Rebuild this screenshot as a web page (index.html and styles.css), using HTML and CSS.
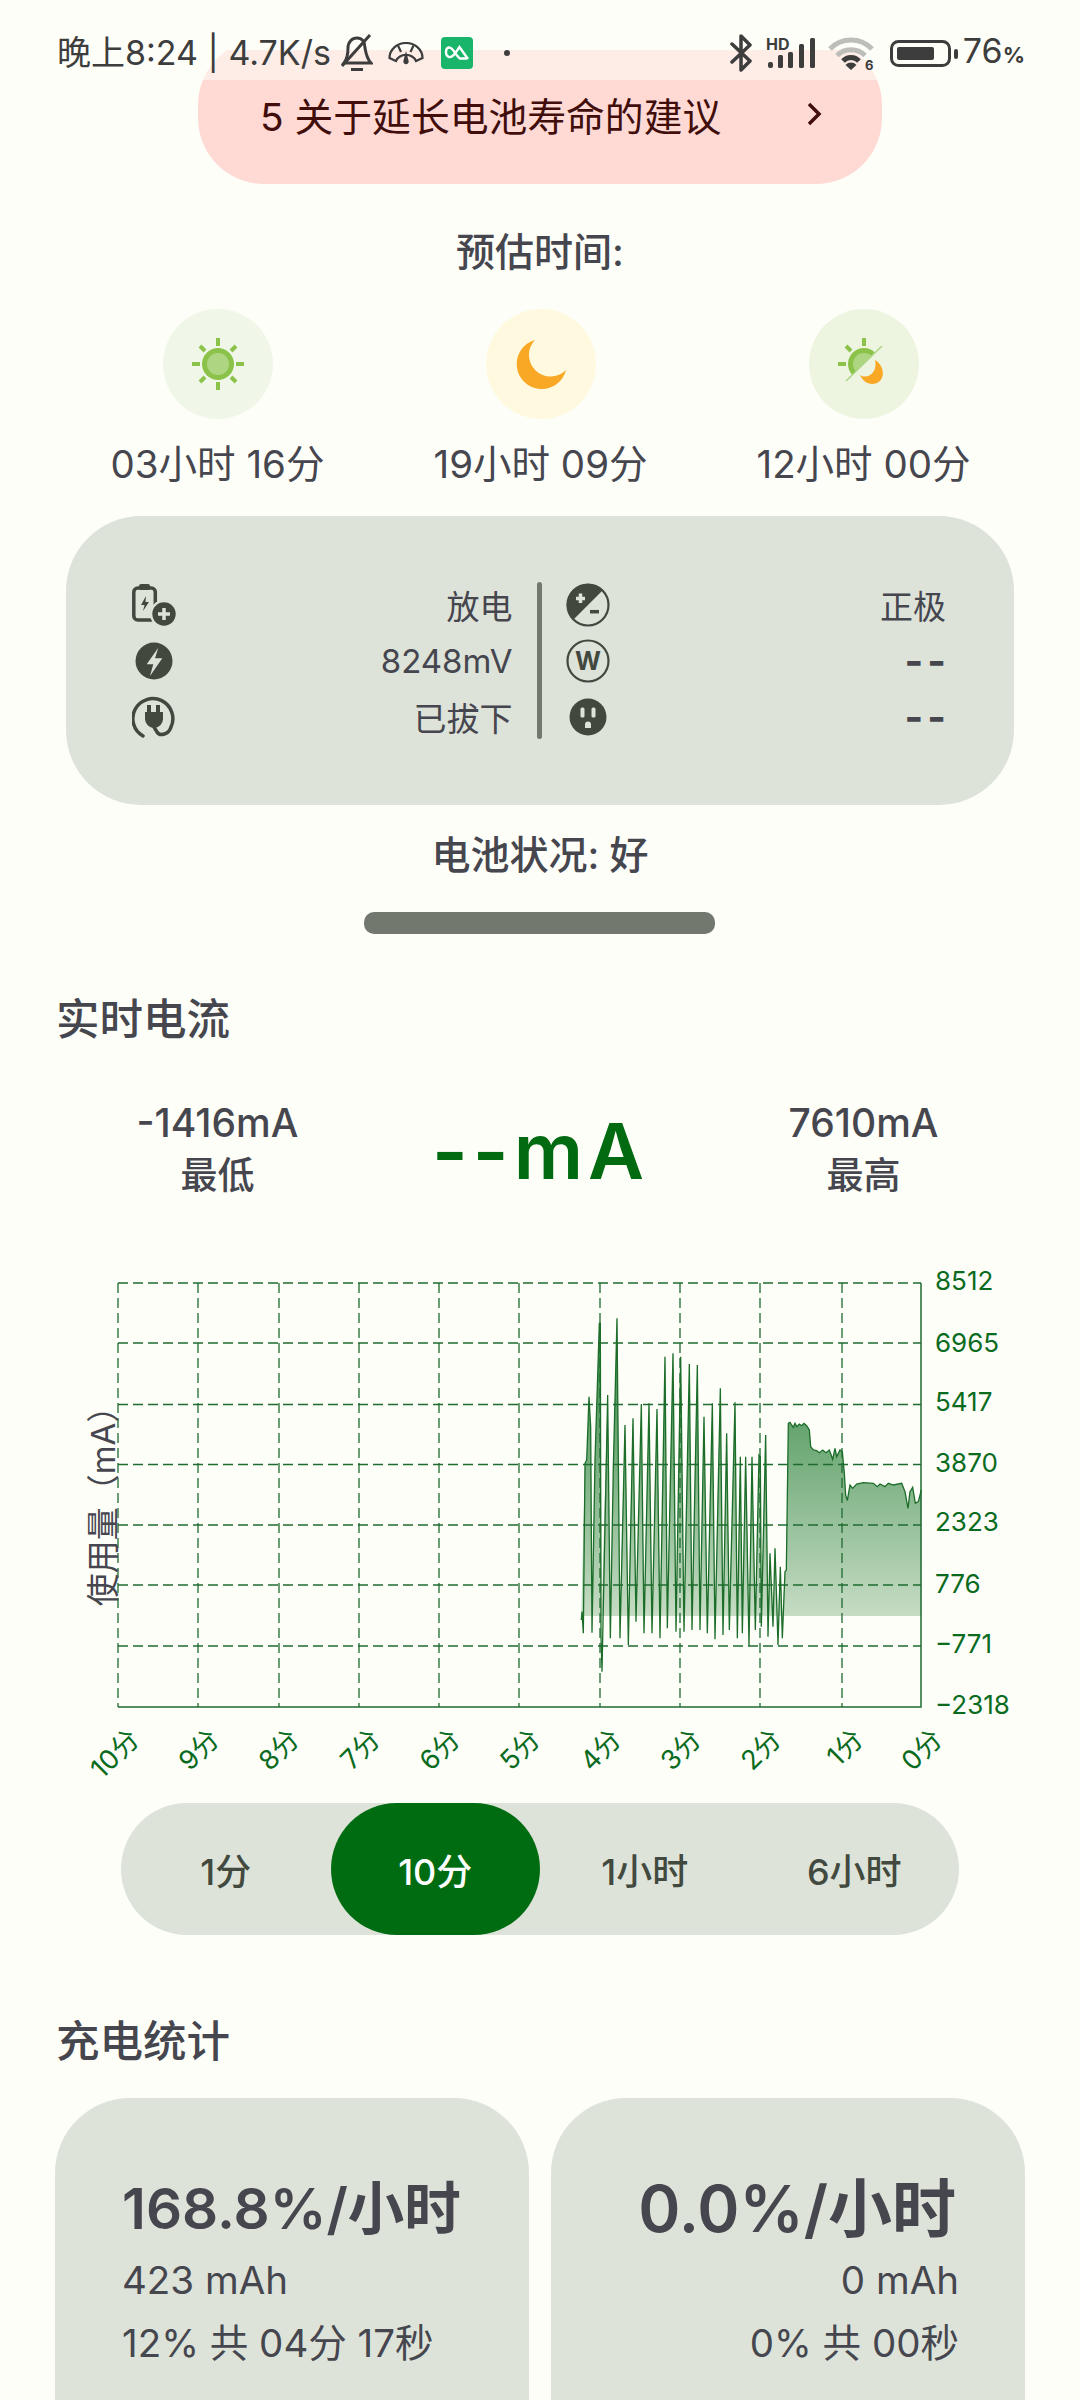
FILE: index.html
```html
<!DOCTYPE html>
<html lang="zh-CN">
<head>
    <meta charset="UTF-8">
    <meta name="viewport" content="width=device-width, initial-scale=1.0">
    <title>电池信息</title>
    <link rel="stylesheet" href="styles.css">
</head>
<body>
<div class="screen">
    <div class="status">
        <div class="status-left">
            <span class="status-text">晚上8:24 | 4.7K/s</span>
            <svg class="ic-bell" viewBox="0 0 33 38">
                <path class="st-line" d="M4 29C8 24 8 18 8 14C8 8 12 4 17 4C22 4 25 8 25 14C26 20 27 25 31 29Z"/>
                <path class="st-line" d="M30 1L2 32M11 35.500H23"/>
            </svg>
            <svg class="ic-gauge" viewBox="0 0 36 23">
                <path class="st-thin" d="M1.500 16A16.500 15 0 0 1 34.500 16L28 19A11 10.500 0 0 0 8 19Z"/>
                <path class="st-thin" d="M10 3.500L13 10M25.500 3.500L22.500 10"/>
                <path class="st-fill" d="M18 9L20.500 18.500A2.700 2.700 0 1 1 15.500 18.500Z"/>
            </svg>
            <svg class="ic-app" viewBox="0 0 32 32">
                <rect class="app-bg" width="32" height="32" rx="4"/>
                <path class="app-mark" d="M27 22L18.500 10C15 15 12 21 8 20C4 19 4 11 8 10.500C12 10 15 19 19 21.500H26"/>
            </svg>
            <span class="status-dot"></span>
        </div>
        <div class="status-right">
            <svg class="ic-bt" viewBox="0 0 24 38">
                <path class="st-bold" d="M3 10L21 27L12 36V2L21 11L3 28"/>
            </svg>
            <svg class="ic-signal" viewBox="0 -4 50 36">
                <text class="hd" x="0" y="13">HD</text>
                <rect class="st-fill" x="2" y="25" width="5" height="6" rx="2"/>
                <rect class="st-fill" x="12" y="18" width="5" height="13" rx="1.500"/>
                <rect class="st-fill" x="22" y="15" width="5" height="16" rx="1.500"/>
                <rect class="st-fill" x="33" y="7" width="5" height="24" rx="1.500"/>
                <rect class="st-fill" x="44" y="1" width="5" height="30" rx="1.500"/>
            </svg>
            <svg class="ic-wifi" viewBox="0 0 46 40">
                <path class="wifi-off" d="M2 14A29 29 0 0 1 44 14"/>
                <path class="wifi-off" d="M9 20.500A20 20 0 0 1 37 20.500"/>
                <path class="wifi-on" d="M15 26A11 11 0 0 1 31 26"/>
                <path class="st-fill" d="M23 35L17.500 30A7.500 7.500 0 0 1 28.500 30Z"/>
                <text class="wifi-num" x="37" y="35">6</text>
            </svg>
            <svg class="ic-batt" viewBox="0 0 69 27">
                <rect class="st-line" x="1.500" y="1.500" width="58" height="24" rx="7"/>
                <rect class="st-fill" x="7" y="7" width="37" height="13" rx="2"/>
                <rect class="st-fill" x="64" y="9" width="4" height="10" rx="2"/>
            </svg>
            <span class="status-text batt-num">76<small>%</small></span>
        </div>
    </div>

    <div class="tip">
        <span>5 关于延长电池寿命的建议</span>
        <svg class="tip-arrow" viewBox="0 0 16 24"><path d="M3 2L13 12L3 22"/></svg>
    </div>

    <div class="est-title">预估时间:</div>
    <div class="three-col est-icons">
        <div class="est-circle sun-bg">
            <svg viewBox="-55 -55 110 110">
                <path class="sun-ray" d="M0 -26V-18M0 26V18M-26 0H-18M26 0H18M-18 -18L-13 -13M18 -18L13 -13M-18 18L-13 13M18 18L13 13"/>
                <circle class="sun-out" r="16"/>
                <circle class="sun-in" r="11"/>
            </svg>
        </div>
        <div class="est-circle moon-bg">
            <svg viewBox="-55 -55 110 110">
                <path class="moon" d="M-6 -24A25 25 0 1 0 25 6A21.500 21.500 0 0 1 -6 -24Z"/>
            </svg>
        </div>
        <div class="est-circle mix-bg">
            <svg viewBox="-55 -55 110 110">
                <clipPath id="halfSun"><polygon points="17,-18 -18,17 -40,17 -40,-40 17,-40"/></clipPath>
                <path class="sun-ray" d="M0 -26V-18M-26 0H-18M-18 -18L-13 -13"/>
                <g clip-path="url(#halfSun)">
                    <circle class="sun-out" r="16"/>
                    <circle class="sun-in" r="11"/>
                </g>
                <path class="mix-slash" d="M18 -18L-18 17"/>
                <path class="moon" d="M11 -4C22 2 22 20 8 20C3 20 -2 16 -4 11C4 16 14 8 11 -4Z"/>
            </svg>
        </div>
    </div>
    <div class="three-col est-times">
        <div>03小时 16分</div>
        <div>19小时 09分</div>
        <div>12小时 00分</div>
    </div>

    <div class="info-card">
        <div class="info-col">
            <div class="info-row">
                <svg class="info-ic" viewBox="0 0 44 44">
                    <rect class="ic-stroke" x="1.800" y="5" width="21.500" height="32" rx="4"/>
                    <rect class="ic-fill" x="7" y="1" width="11" height="6" rx="2"/>
                    <polygon class="ic-fill" points="14,13 9,22 12.500,22 11,28 17,19 13.500,19"/>
                    <circle class="ic-gap" cx="32" cy="31" r="14"/>
                    <circle class="ic-fill" cx="32" cy="31" r="11.700"/>
                    <path class="ic-plus" d="M32 25V37M26 31H38"/>
                </svg>
                <span>放电</span>
            </div>
            <div class="info-row">
                <svg class="info-ic" viewBox="0 0 44 44">
                    <circle class="ic-fill" cx="22" cy="22" r="18.500"/>
                    <polygon class="ic-cut" points="26.300,8.700 14.700,25.300 21.300,25.300 18,37 30.300,19.300 23,19.300"/>
                </svg>
                <span>8248mV</span>
            </div>
            <div class="info-row">
                <svg class="info-ic" viewBox="0 0 44 44">
                    <path class="ic-stroke" d="M11 41A20 20 0 1 1 39 32C37 39 28 42 25 37C24 35 23 34 22 32"/>
                    <path class="ic-fill" d="M15 10H19V17H24V10H28V17H31V24A9 9 0 0 1 13 24V17H15Z"/>
                </svg>
                <span>已拔下</span>
            </div>
        </div>
        <div class="info-divider"></div>
        <div class="info-col">
            <div class="info-row">
                <svg class="info-ic" viewBox="0 0 44 44">
                    <circle class="ic-stroke-thin" cx="22" cy="22" r="20.500"/>
                    <path class="ic-fill" d="M7 37A21 21 0 0 1 37 7Z"/>
                    <path class="ic-plus" d="M14.500 10.500V20M10 15.500H19"/>
                    <path class="ic-minus" d="M24 28.700H33"/>
                </svg>
                <span>正极</span>
            </div>
            <div class="info-row">
                <svg class="info-ic" viewBox="0 0 44 44">
                    <circle class="ic-stroke-thin" cx="22" cy="22" r="20.500"/>
                    <text class="ic-w" x="22" y="31">W</text>
                </svg>
                <span class="dash">--</span>
            </div>
            <div class="info-row">
                <svg class="info-ic" viewBox="0 0 44 44">
                    <circle class="ic-fill" cx="22" cy="22" r="18.500"/>
                    <rect class="ic-cut" x="14.500" y="12.500" width="4" height="10" rx="1.500"/>
                    <rect class="ic-cut" x="25.500" y="12.500" width="4" height="10" rx="1.500"/>
                    <path class="ic-cut" d="M19 33V29.500A3 3 0 0 1 25 29.500V33Z"/>
                </svg>
                <span class="dash">--</span>
            </div>
        </div>
    </div>

    <div class="health">电池状况: 好</div>
    <div class="health-bar"></div>

    <h2 class="section-title first">实时电流</h2>
    <div class="three-col stats">
        <div class="stat"><div class="stat-val">-1416mA</div><div class="stat-lbl">最低</div></div>
        <div class="stat-now">--mA</div>
        <div class="stat"><div class="stat-val">7610mA</div><div class="stat-lbl">最高</div></div>
    </div>

    <svg class="chart" viewBox="0 1240 1080 550">
        <defs>
            <linearGradient id="areaFill" gradientUnits="userSpaceOnUse" x1="0" y1="175" x2="0" y2="1068">
                <stop offset="0" stop-color="#2f8540"/>
                <stop offset="1" stop-color="#c6dcc4"/>
            </linearGradient>
            <clipPath id="aboveZero"><rect x="0" y="0" width="1200" height="1068"/></clipPath>
        </defs>
        <g transform="translate(540 1260) scale(0.33333)">
            <path class="area" clip-path="url(#aboveZero)" d="M124 1068L135 610L140 600L147 410L152 500L156 1068L165 600L178 190L181 190L185 1068L203 405L211 1068L220 620L231 175L240 1068L255 495L265 1068L279 475L288 1068L304 432L312 1068L327 430L336 1068L351 447L360 1068L375 290L382 1068L399 280L408 1068L422 290L432 1068L448 312L456 1068L472 315L480 1068L492 470L502 1068L517 430L525 1068L541 385L549 1068L560 520L568 1068L585 427L592 1068L601 590L607 1068L617 590L627 1068L636 590L646 1068L657 585L661 590L664 1068L677 525L684 1068L690 880L699 1068L705 865L714 1068L721 920L727 1068L735 935L739 930L745 490L750 487L755 495L760 502L765 490L770 500L778 492L785 497L792 490L800 497L808 510L812 560L820 570L830 572L838 578L848 570L858 578L868 570L878 598L885 565L890 590L900 570L907 575L913 640L917 705L922 722L930 675L938 685L950 672L970 668L1000 670L1012 680L1020 672L1035 680L1045 670L1060 675L1085 670L1095 695L1104 745L1110 695L1118 682L1126 730L1135 725L1144 690V1068Z"/>
        </g>
        <path class="grid" d="M118 1283V1707M198 1283V1707M279 1283V1707M359 1283V1707M439 1283V1707M519 1283V1707M600 1283V1707M680 1283V1707M760 1283V1707M842 1283V1707"/>
        <path class="grid" d="M118 1283H921M118 1343H921M118 1404.500H921M118 1464.500H921M118 1525H921M118 1585H921M118 1646H921"/>
        <path class="axis" d="M921 1283V1707H118"/>
        <g transform="translate(540 1260) scale(0.33333)">
            <path class="curve" d="M124 1080L126 1055L130 1120L135 610L140 600L147 410L152 500L156 1118L165 600L178 190L181 190L183 1130L186 1235L203 405L211 1135L220 620L231 175L240 1135L255 495L265 1155L279 475L288 1085L304 432L312 1120L327 430L336 1120L351 447L360 1135L375 290L382 1105L399 280L408 1115L422 290L432 1115L448 312L456 1110L472 315L480 1110L492 470L502 1120L517 430L525 1138L541 385L549 1125L560 520L568 1110L585 427L592 1135L601 590L607 1120L617 590L627 1158L636 590L646 1110L657 585L661 590L664 1100L677 525L684 1130L690 880L699 1100L705 865L714 1155L721 920L727 1135L735 935L739 930L745 490L750 487L755 495L760 502L765 490L770 500L778 492L785 497L792 490L800 497L808 510L812 560L820 570L830 572L838 578L848 570L858 578L868 570L878 598L885 565L890 590L900 570L907 575L913 640L917 705L922 722L930 675L938 685L950 672L970 668L1000 670L1012 680L1020 672L1035 680L1045 670L1060 675L1085 670L1095 695L1104 745L1110 695L1118 682L1126 730L1135 725L1144 690"/>
        </g>
        <text class="y-tick" x="935" y="1290">8512</text>
        <text class="y-tick" x="935" y="1352">6965</text>
        <text class="y-tick" x="935" y="1411">5417</text>
        <text class="y-tick" x="935" y="1472">3870</text>
        <text class="y-tick" x="935" y="1531">2323</text>
        <text class="y-tick" x="935" y="1593">776</text>
        <text class="y-tick" x="935" y="1653">−771</text>
        <text class="y-tick" x="935" y="1714">−2318</text>
        <g transform="translate(7 5)">
            <text class="x-tick" transform="translate(134 1736) rotate(-45)">10分</text>
            <text class="x-tick" transform="translate(214 1736) rotate(-45)">9分</text>
            <text class="x-tick" transform="translate(294 1736) rotate(-45)">8分</text>
            <text class="x-tick" transform="translate(375 1736) rotate(-45)">7分</text>
            <text class="x-tick" transform="translate(455 1736) rotate(-45)">6分</text>
            <text class="x-tick" transform="translate(535 1736) rotate(-45)">5分</text>
            <text class="x-tick" transform="translate(616 1736) rotate(-45)">4分</text>
            <text class="x-tick" transform="translate(696 1736) rotate(-45)">3分</text>
            <text class="x-tick" transform="translate(776 1736) rotate(-45)">2分</text>
            <text class="x-tick" transform="translate(858 1736) rotate(-45)">1分</text>
            <text class="x-tick" transform="translate(937 1736) rotate(-45)">0分</text>
        </g>
        <text class="y-title" transform="translate(115 1498) rotate(-90)">使用量（mA）</text>
    </svg>

    <div class="range">
        <div class="range-item">1分</div>
        <div class="range-item active">10分</div>
        <div class="range-item">1小时</div>
        <div class="range-item">6小时</div>
    </div>

    <h2 class="section-title second">充电统计</h2>
    <div class="charge-grid">
        <div class="charge-card">
            <div class="charge-rate">168.8%/小时</div>
            <div class="charge-line">423 mAh</div>
            <div class="charge-line">12% 共 04分 17秒</div>
        </div>
        <div class="charge-card right">
            <div class="charge-rate big">0.0%/小时</div>
            <div class="charge-line">0 mAh</div>
            <div class="charge-line">0% 共 00秒</div>
        </div>
    </div>
</div>
</body>
</html>
```

FILE: styles.css
```css
* {
    box-sizing: border-box;
}
body {
    margin: 0;
    font-family: Inter, "Noto Sans CJK SC", sans-serif;
    color: #46464f;
    background: #fdfef8;
}
svg {
    display: block;
}
.screen {
    position: relative;
    width: 1080px;
    height: 2400px;
    overflow: hidden;
    padding-top: 39px;
    background: #fdfef8;
}

/* status bar sits over the scrolled page */
.status {
    position: absolute;
    top: 0;
    left: 0;
    width: 1080px;
    height: 80px;
    padding: 26px 55px 0 57px;
    display: flex;
    justify-content: space-between;
    align-items: flex-start;
    background: linear-gradient(#fdfef8 50px, rgba(253, 254, 248, 0.5) 50px);
    color: #3d3d3d;
}
.status-left, .status-right {
    display: flex;
    align-items: center;
    height: 54px;
}
.status-text {
    font-size: 34px;
    line-height: 54px;
    white-space: nowrap;
}
.batt-num small {
    font-size: 22px;
    font-weight: 700;
}
.st-line, .st-thin, .st-bold {
    fill: none;
    stroke: #3d3d3d;
}
.st-line { stroke-width: 3; }
.st-thin { stroke-width: 2.2; }
.st-bold { stroke-width: 3.5; stroke-linejoin: round; stroke-linecap: round; }
.st-fill { fill: #3d3d3d; }
.ic-bell { width: 33px; height: 38px; margin-left: 9px; }
.ic-gauge { width: 36px; height: 23px; margin-left: 15px; }
.ic-app { width: 32px; height: 32px; margin-left: 17px; }
.app-bg { fill: #19b56b; }
.app-mark { fill: none; stroke: #fff; stroke-width: 2.4; }
.status-dot {
    width: 6px;
    height: 6px;
    margin-left: 31px;
    border-radius: 50%;
    background: #3d3d3d;
}
.ic-bt { width: 24px; height: 38px; }
.ic-signal { width: 50px; height: 36px; margin: -4px 0 0 13px; }
.hd { font-size: 16px; font-weight: 700; fill: #3d3d3d; }
.ic-wifi { width: 46px; height: 40px; margin: 4px 0 0 12px; }
.wifi-off, .wifi-on { fill: none; stroke-width: 5; }
.wifi-off { stroke: #bdbdba; }
.wifi-on { stroke: #3d3d3d; }
.wifi-num { font-size: 13px; font-weight: 700; fill: #3d3d3d; }
.ic-batt { width: 69px; height: 27px; margin-left: 16px; }
.batt-num { margin-left: 4px; }

/* tip */
.tip {
    width: 684px;
    height: 145px;
    margin-left: 198px;
    padding: 5px 60px 0 62px;
    display: flex;
    justify-content: space-between;
    align-items: center;
    border-radius: 66px;
    background: #ffdad5;
    color: #410e0b;
    font-size: 38.800px;
}
.tip-arrow {
    width: 16px;
    height: 24px;
}
.tip-arrow path {
    fill: none;
    stroke: #410e0b;
    stroke-width: 3.5;
}

/* estimates */
.three-col {
    display: grid;
    grid-template-columns: repeat(3, 323px);
    padding-left: 56px;
    justify-items: center;
    text-align: center;
}
.est-title {
    margin-top: 43px;
    font-size: 39px;
    font-weight: 500;
    line-height: 50px;
    text-align: center;
}
.est-icons {
    margin-top: 32px;
}
.est-circle {
    width: 110px;
    height: 110px;
    border-radius: 50%;
}
.sun-bg { background: #f0f6e8; }
.moon-bg { background: #fff9e0; }
.mix-bg { background: #edf5e1; }
.sun-ray { fill: none; stroke: #8bc34a; stroke-width: 4; }
.sun-out { fill: #8bc34a; }
.sun-in { fill: #aed581; }
.moon { fill: #f9a825; }
.mix-slash { fill: none; stroke: #aed581; stroke-width: 1.5; }
.est-times {
    margin-top: 20px;
    font-size: 38.500px;
    line-height: 50px;
}

/* battery info */
.info-card {
    width: 948px;
    height: 289px;
    margin: 27px 0 0 66px;
    padding: 0 68px 0 66px;
    display: flex;
    align-items: center;
    gap: 24px;
    border-radius: 75px;
    background: #dde3d9;
    font-size: 33px;
}
.info-col {
    flex: 1;
}
.info-row {
    height: 56px;
    display: flex;
    justify-content: space-between;
    align-items: center;
}
.info-ic {
    width: 44px;
    height: 44px;
}
.dash {
    margin-right: -4px;
    font-size: 40px;
    font-weight: 700;
    letter-spacing: 4px;
}
.info-divider {
    width: 5px;
    height: 157px;
    border-radius: 3px;
    background: #72786e;
}
.ic-fill { fill: #43483f; }
.ic-cut { fill: #dde3d9; }
.ic-gap { fill: #dde3d9; }
.ic-stroke { fill: none; stroke: #43483f; stroke-width: 3.5; stroke-linecap: round; }
.ic-stroke-thin { fill: none; stroke: #43483f; stroke-width: 2.2; }
.ic-plus { fill: none; stroke: #dde3d9; stroke-width: 3.5; }
.ic-minus { fill: none; stroke: #43483f; stroke-width: 3.5; }
.ic-w { font-size: 25px; font-weight: 700; fill: #43483f; text-anchor: middle; }

.health {
    margin-top: 25px;
    font-size: 39px;
    font-weight: 500;
    line-height: 50px;
    text-align: center;
}
.health-bar {
    width: 351px;
    height: 22px;
    margin: 32px 0 0 364px;
    border-radius: 10px;
    background: #72786e;
}

.section-title {
    margin: 0 0 0 56px;
    font-size: 43.500px;
    font-weight: 500;
    line-height: 56px;
}
.section-title.first { margin-top: 57px; }
.section-title.second { margin-top: 78px; }

/* live current */
.stats {
    margin-top: 51px;
    align-items: center;
}
.stat-val {
    font-size: 39px;
    font-weight: 500;
    line-height: 50px;
}
.stat-lbl {
    font-size: 37px;
    font-weight: 500;
    line-height: 56px;
}
.stat-now {
    font-size: 77px;
    font-weight: 600;
    letter-spacing: 5px;
    color: #026a10;
}

.chart {
    width: 1080px;
    height: 550px;
    margin-top: 36px;
}
.area { fill: url(#areaFill); }
.grid {
    fill: none;
    stroke: #1f6b30;
    stroke-width: 1.3;
    stroke-dasharray: 10 5;
}
.axis {
    fill: none;
    stroke: #1f6b30;
    stroke-width: 1.5;
}
.curve {
    fill: none;
    stroke: #1c6d2a;
    stroke-width: 1.3;
    vector-effect: non-scaling-stroke;
}
.y-tick, .x-tick {
    font-size: 26px;
    fill: #0a6b1e;
}
.x-tick {
    font-size: 27px;
    text-anchor: end;
}
.y-title {
    font-size: 33px;
    fill: #46464f;
    text-anchor: middle;
}

/* range switch */
.range {
    width: 838px;
    height: 132px;
    margin: 13px 0 0 121px;
    display: grid;
    grid-template-columns: repeat(4, 1fr);
    border-radius: 66px;
    background: #dde3d9;
    color: #42493f;
    font-size: 36px;
    font-weight: 500;
}
.range-item {
    display: flex;
    justify-content: center;
    align-items: center;
    border-radius: 66px;
}
.range-item.active {
    background: #006c11;
    color: #fff;
}

/* charge stats */
.charge-grid {
    display: grid;
    grid-template-columns: 474px 474px;
    gap: 22px;
    margin: 29px 0 0 55px;
}
.charge-card {
    height: 420px;
    padding: 71px 67px 0;
    border-radius: 75px;
    background: #dde3d9;
}
.charge-card.right {
    padding-right: 66px;
    text-align: right;
}
.charge-rate {
    font-size: 56.500px;
    font-weight: 600;
    line-height: 80px;
    white-space: nowrap;
}
.charge-rate.big {
    margin-right: 3px;
    font-size: 64px;
}
.charge-line {
    font-size: 38.500px;
    line-height: 63px;
    white-space: nowrap;
}
```
